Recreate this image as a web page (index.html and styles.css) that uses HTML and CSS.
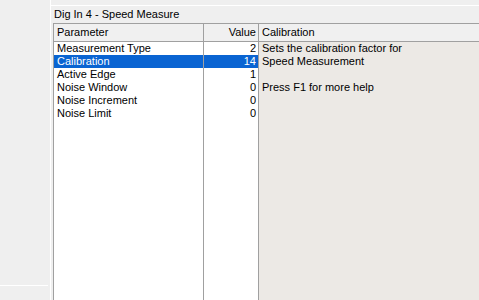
FILE: index.html
```html
<!DOCTYPE html>
<html lang="en">

<head>
    <meta charset="UTF-8">
    <meta name="viewport" content="width=device-width, initial-scale=1.0">
    <title>Dig In 4 - Speed Measure</title>
    <link rel="stylesheet" href="styles.css">
</head>

<body>

    <div class="sisi">
        <div class="sisi-atas"></div>
        <div class="sisi-bawah"></div>
    </div>

    <div class="utama">
        <div class="judul">Dig In 4 - Speed Measure</div>
        <div class="panel">
            <div class="kepala">
                <div class="kol-param">Parameter</div>
                <div class="kol-nilai">Value</div>
                <div class="kol-info">Calibration</div>
            </div>
            <div class="isi">
                <div class="kol-param daftar">
                    <div class="sel">Measurement Type</div>
                    <div class="sel terpilih">Calibration</div>
                    <div class="sel">Active Edge</div>
                    <div class="sel">Noise Window</div>
                    <div class="sel">Noise Increment</div>
                    <div class="sel">Noise Limit</div>
                </div>
                <div class="kol-nilai daftar">
                    <div class="sel">2</div>
                    <div class="sel terpilih">14</div>
                    <div class="sel">1</div>
                    <div class="sel">0</div>
                    <div class="sel">0</div>
                    <div class="sel">0</div>
                </div>
                <div class="kol-info keterangan">
                    <div class="sel">Sets the calibration factor for</div>
                    <div class="sel">Speed Measurement</div>
                    <div class="sel"></div>
                    <div class="sel">Press F1 for more help</div>
                </div>
            </div>
        </div>
    </div>

</body>

</html>
```

FILE: styles.css
```css
body {
    margin: 0;
    height: 300px;
    overflow: hidden;
    display: flex;
    background-color: #efefef;
    font-family: "Liberation Sans", Arial, sans-serif;
    font-size: 11px;
    color: black;
}

.sisi {
    width: 50px;
    border-right: 1px solid #ffffff;
    display: flex;
    flex-direction: column;
}

.sisi-atas {
    height: 285px;
}

.sisi-bawah {
    flex: 1;
    border-top: 1px solid #ffffff;
    margin-right: 2px;
}

.utama {
    flex: 1;
    display: flex;
    flex-direction: column;
    margin-top: 5px;
    border-top: 1px solid #ffffff;
    padding-left: 2px;
}

.judul {
    height: 17px;
    line-height: 17px;
    padding-left: 1px;
}

.panel {
    flex: 1;
    display: flex;
    flex-direction: column;
    border-left: 1px solid #a0a0a0;
    border-top: 1px solid #a0a0a0;
}

.kepala {
    display: flex;
    height: 17px;
    line-height: 17px;
    background-color: #f0f0f0;
    border-bottom: 1px solid #a0a0a0;
}

.isi {
    flex: 1;
    display: flex;
}

.kol-param {
    width: 150px;
    box-sizing: border-box;
    border-right: 1px solid #a0a0a0;
    white-space: nowrap;
}

.kol-nilai {
    width: 55px;
    box-sizing: border-box;
    text-align: right;
    border-right: 1px solid #a0a0a0;
}

.kol-info {
    flex: 1;
    white-space: nowrap;
}

.kepala .kol-param,
.daftar.kol-param .sel,
.kol-info .sel,
.kepala .kol-info {
    padding-left: 3px;
}

.kepala .kol-nilai,
.daftar.kol-nilai .sel {
    padding-right: 2px;
}

.daftar {
    background-color: #ffffff;
}

.sel {
    height: 13px;
    line-height: 13px;
}

.terpilih {
    background-color: #0a64d2;
    color: #ffffff;
}

.keterangan {
    background-color: #ece9e5;
}
```
